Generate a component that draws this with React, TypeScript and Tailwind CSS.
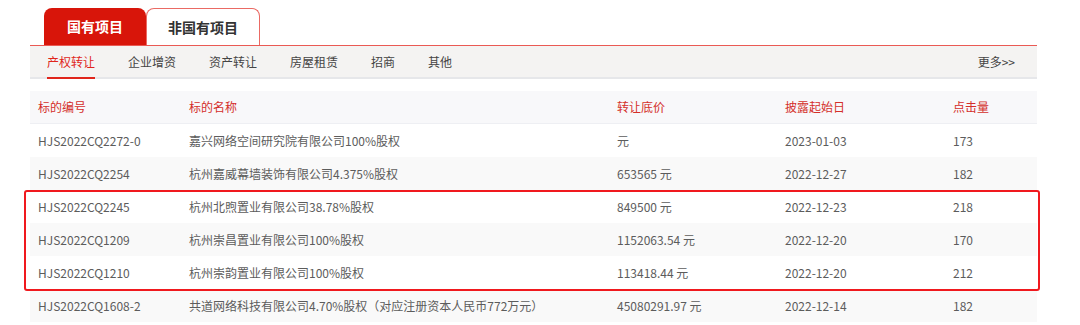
import React from "react";

const subNav = ["产权转让", "企业增资", "资产转让", "房屋租赁", "招商", "其他"];

const rows = [
  ["HJS2022CQ2272-0", "嘉兴网络空间研究院有限公司100%股权", "元", "2023-01-03", "173"],
  ["HJS2022CQ2254", "杭州嘉威幕墙装饰有限公司4.375%股权", "653565 元", "2022-12-27", "182"],
  ["HJS2022CQ2245", "杭州北煦置业有限公司38.78%股权", "849500 元", "2022-12-23", "218"],
  ["HJS2022CQ1209", "杭州崇昌置业有限公司100%股权", "1152063.54 元", "2022-12-20", "170"],
  ["HJS2022CQ1210", "杭州崇韵置业有限公司100%股权", "113418.44 元", "2022-12-20", "212"],
  ["HJS2022CQ1608-2", "共道网络科技有限公司4.70%股权（对应注册资本人民币772万元）", "45080291.97 元", "2022-12-14", "182"],
];

const cols = ["w-[151px]", "w-[428px]", "w-[168px]", "w-[168px]", "flex-1"];

export default function App() {
  return (
    <div
      className="relative h-[325px] w-[1080px] overflow-hidden bg-white text-[12px] text-[#5c5c5c]"
      style={{ fontFamily: '"Noto Sans CJK SC", "Noto Sans", sans-serif' }}
    >
      <div className="ml-[30px] w-[1007px]">
        {/* top tabs */}
        <div className="flex h-[45px] items-end pl-[14px]">
          <div className="flex h-[37px] w-[102px] items-center justify-center rounded-t-[8px] bg-[#d8150a] text-[14px] font-bold text-white">
            国有项目
          </div>
          <div className="flex h-[37px] w-[114px] items-center justify-center rounded-t-[8px] border border-b-0 border-[#ea6a64] bg-white text-[14px] font-bold text-[#333]">
            非国有项目
          </div>
        </div>
        <div className="h-px bg-[#ea5a54]" />

        {/* sub nav */}
        <div className="flex h-[33px] items-center border-b-2 border-[#e6e7ea] bg-[#f4f3f2] pl-[17px] pr-[22px]">
          {subNav.map((s, i) => (
            <div
              key={s}
              className={
                "relative mr-[33px] flex h-full items-center " + (i === 0 ? "text-[#e0251b]" : "text-[#444]")
              }
            >
              {s}
              {i === 0 && <span className="absolute bottom-[-2px] left-0 h-[2px] w-full bg-[#e0251b]" />}
            </div>
          ))}
          <div className="ml-auto text-[#444]">更多&gt;&gt;</div>
        </div>

        {/* table */}
        <div className="mt-[12px]">
          <div className="flex h-[33px] items-center border-b border-[#eeeff3] bg-[#f8f8fa] pl-[8px] text-[#d42f2a]">
            {["标的编号", "标的名称", "转让底价", "披露起始日", "点击量"].map((h, i) => (
              <div key={h} className={cols[i]}>
                {h}
              </div>
            ))}
          </div>
          {rows.map((r, ri) => (
            <div
              key={r[0]}
              className={"flex h-[33px] items-center pl-[8px] " + (ri % 2 === 1 ? "bg-[#f9f9f9]" : "bg-white")}
            >
              {r.map((c, i) => (
                <div key={i} className={cols[i] + " whitespace-nowrap"}>
                  {c}
                </div>
              ))}
            </div>
          ))}
        </div>
      </div>

      {/* highlight annotation */}
      <div className="pointer-events-none absolute left-[24px] top-[190px] h-[101px] w-[1016px] rounded-[3px] border-2 border-[#f0191e]" />
    </div>
  );
}
